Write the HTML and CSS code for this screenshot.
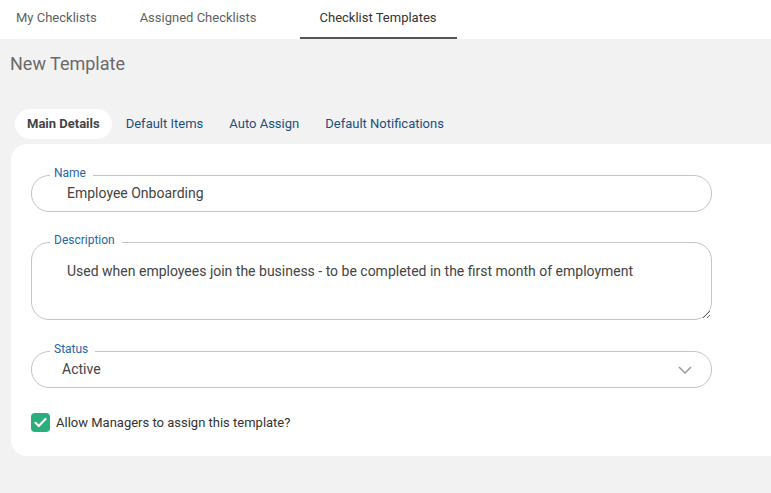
FILE: index.html
```html
<!DOCTYPE html>
<html lang="en">

<head>
    <meta charset="UTF-8">
    <meta name="viewport" content="width=device-width, initial-scale=1.0">
    <title>New Template</title>
    <link rel="stylesheet" href="styles.css">
</head>

<body>
    <div class="top-tabs">
        <a class="top-tab first" href="#">My Checklists</a>
        <a class="top-tab" href="#">Assigned Checklists</a>
        <a class="top-tab active" href="#">Checklist Templates</a>
    </div>

    <div class="page">
        <h1 class="page-title">New Template</h1>

        <div class="sub-tabs">
            <a class="sub-tab active" href="#">Main Details</a>
            <a class="sub-tab" href="#">Default Items</a>
            <a class="sub-tab" href="#">Auto Assign</a>
            <a class="sub-tab" href="#">Default Notifications</a>
        </div>

        <div class="card">
            <fieldset class="field">
                <legend>Name</legend>
                <input class="field-input" type="text" value="Employee Onboarding">
            </fieldset>

            <fieldset class="field field-area">
                <legend>Description</legend>
                <textarea class="field-textarea">Used when employees join the business - to be completed in the first month of employment</textarea>
            </fieldset>

            <fieldset class="field field-select">
                <legend>Status</legend>
                <select class="field-input select-input">
                    <option>Active</option>
                    <option>Inactive</option>
                </select>
                <svg class="chevron" width="14" height="8" viewBox="0 0 14 8">
                    <path d="M1 1 L7 7 L13 1" fill="none" stroke="#9a9a9a" stroke-width="1.5" />
                </svg>
            </fieldset>

            <label class="check-row">
                <span class="check-box">
                    <svg width="13" height="11" viewBox="0 0 13 11">
                        <path d="M1.5 5.8 L4.8 9 L11.5 2" fill="none" stroke="#fff" stroke-width="2.2" stroke-linecap="round" stroke-linejoin="round" />
                    </svg>
                </span>
                Allow Managers to assign this template?
            </label>
        </div>
    </div>
</body>

</html>
```

FILE: styles.css
```css
/* Global styles */
body {
    margin: 0;
    font-family: Roboto, "Liberation Sans", Arial, sans-serif;
    background-color: #f2f2f2;
}

/* Top tabs */
.top-tabs {
    display: flex;
    gap: 23px;
    height: 39px;
    background-color: #fff;
}

.top-tab {
    box-sizing: border-box;
    height: 39px;
    padding: 0 20px;
    line-height: 35px;
    font-size: 13px;
    color: #5f5f5f;
    text-decoration: none;
    border-bottom: 2px solid transparent;
}

.top-tab.first {
    margin-left: -4px;
    padding-right: 0;
}

.top-tab.active {
    color: #333;
    border-bottom-color: #555;
}

/* Page */
.page {
    padding: 14px 0 0 10px;
}

.page-title {
    margin: 0;
    font-size: 18px;
    line-height: 22px;
    font-weight: 400;
    color: #6a6a6a;
}

.sub-tabs {
    display: flex;
    gap: 2px;
    margin: 34px 0 5px 5px;
}

.sub-tab {
    height: 30px;
    padding: 0 12px;
    line-height: 30px;
    border-radius: 15px;
    font-size: 13px;
    color: #1c4f7f;
    text-decoration: none;
}

.sub-tab.active {
    background-color: #fff;
    color: #444;
    font-weight: bold;
}

/* Card */
.card {
    margin-left: 1px;
    padding: 23px 20px 24px;
    background-color: #fff;
    border-radius: 16px 0 0 16px;
}

/* Outlined fields */
.field {
    width: 681px;
    box-sizing: border-box;
    margin: 0 0 22px;
    padding: 0 0 5px 18px;
    border: 1px solid #c4c4c4;
    border-radius: 18px;
}

.field legend {
    padding: 0 7px 4px 4px;
    font-size: 12px;
    line-height: 12px;
    color: #2366a8;
}

.field-input {
    display: block;
    box-sizing: border-box;
    width: 100%;
    height: 26px;
    margin-top: -3px;
    padding: 0 0 0 17px;
    border: none;
    outline: none;
    background: transparent;
    font-family: inherit;
    font-size: 14px;
    color: #444;
}

.field-area {
    margin-bottom: 23px;
    padding-bottom: 0;
}

.field-textarea {
    display: block;
    box-sizing: border-box;
    width: 100%;
    height: 72px;
    margin-top: -3px;
    padding: 14px 10px 0 17px;
    border: none;
    outline: none;
    background: transparent;
    font-family: inherit;
    font-size: 14px;
    line-height: 20px;
    color: #444;
    border-radius: 0 0 17px 0;
}

.field-select {
    display: flex;
    align-items: center;
}

.select-input {
    flex: 1;
    padding-left: 12px;
    appearance: none;
    -webkit-appearance: none;
}

.chevron {
    margin: -2px 19px 0 8px;
}

/* Checkbox */
.check-row {
    display: flex;
    align-items: center;
    gap: 6px;
    margin-top: 25px;
    font-size: 13px;
    color: #333;
}

.check-box {
    display: flex;
    align-items: center;
    justify-content: center;
    width: 19px;
    height: 19px;
    border-radius: 4px;
    background-color: #2bae7e;
}
```
